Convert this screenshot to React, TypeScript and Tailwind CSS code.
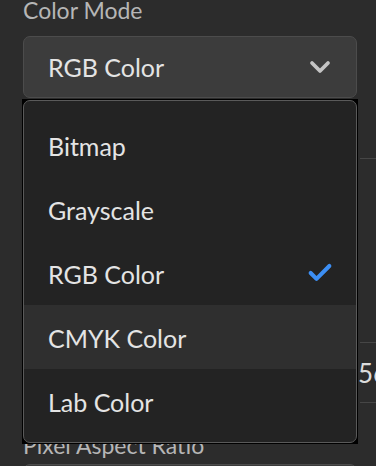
import { Check, ChevronDown } from "lucide-react";

const items = ["Bitmap", "Grayscale", "RGB Color", "CMYK Color", "Lab Color"];

const App = () => {
  const selected = "RGB Color";
  const hovered = "CMYK Color";

  return (
    <div className="relative w-[376px] h-[466px] overflow-hidden bg-[#2c2c2c] font-['Lato',sans-serif]">
      {/* panel behind the menu */}
      <div className="pl-[23px]">
        <div className="h-[30px] pt-[1px] text-[23px] leading-[24px] text-[#b6b6b6] -mt-[3px]">
          Color Mode
        </div>
        <div className="mt-[9px] flex items-center justify-between w-[334px] h-[62px] rounded-[7px] border border-[#4c4c4c] bg-[#3c3c3c] pl-[24px] pr-[20px]">
          <span className="pt-[2px] text-[25px] text-[#e4e4e4]">RGB Color</span>
          <ChevronDown className="w-[32px] h-[32px] text-[#c4c4c4]" strokeWidth={2.8} />
        </div>
      </div>

      <div className="ml-[360px] mt-[60px] h-[184px] border-t border-[#464646]" />
      <div className="ml-[360px] h-[61px] border-t border-b border-[#464646] flex items-center">
        <span className="pt-[2px] text-[26px] text-[#dcdcdc] -ml-[2px]">56</span>
      </div>
      <div className="pl-[23px] mt-[30px] text-[23px] leading-[24px] text-[#b6b6b6]">
        Pixel Aspect Ratio
      </div>
      <div className="ml-[23px] mt-[7px] h-[40px] w-[334px] rounded-[7px] border border-[#4c4c4c] bg-[#3c3c3c]" />

      {/* open dropdown menu */}
      <div className="absolute left-[22px] top-[99px] w-[336px] h-[345px] border border-black bg-black">
        <div className="h-full rounded-[7px] border border-[#5a5a5a] bg-[#232323] pt-[12px] overflow-hidden">
          {items.map((item) => (
            <div
              key={item}
              className={`flex items-center justify-between h-[64px] pl-[24px] pr-[22px] ${
                item === hovered ? "bg-[#2f2f2f]" : ""
              }`}
            >
              <span className="pt-[3px] text-[25px] text-[#e4e4e4]">{item}</span>
              {item === selected && (
                <Check className="w-[28px] h-[28px] text-[#3c8ef3]" strokeWidth={3.5} />
              )}
            </div>
          ))}
        </div>
      </div>
    </div>
  );
};

export default App;
